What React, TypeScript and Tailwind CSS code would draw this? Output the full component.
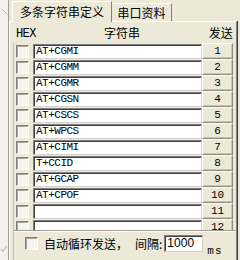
const ROWS = ['AT+CGMI', 'AT+CGMM', 'AT+CGMR', 'AT+CGSN', 'AT+CSCS', 'AT+WPCS', 'AT+CIMI', 'T+CCID', 'AT+GCAP', 'AT+CPOF', '', ''];

const cjk = "font-['Noto_Sans_CJK_SC',sans-serif]";
const mono = "font-['Liberation_Mono',monospace]";

function Check({ className = '' }: { className?: string }) {
  return (
    <span
      className={`block w-[13px] h-[13px] shrink-0 bg-[#F4F4F0] border border-t-[#808080] border-l-[#808080] border-b-white border-r-white shadow-[inset_1px_1px_0_#A7A69E] ${className}`}
    />
  );
}

export default function App() {
  return (
    <div className={`w-[240px] h-[260px] overflow-hidden flex bg-[#ECE9D8] text-black ${cjk}`}>
      {/* clipped neighbour panel */}
      <div className="w-[9px] shrink-0 bg-[#F3F2EC] border-r border-[#9C9B94] relative">
        <svg className="absolute left-[2px] top-[9px]" width="6" height="6" viewBox="0 0 6 6">
          <path d="M0 0 L6 6" stroke="#C8C6BC" strokeWidth="1" />
        </svg>
        <svg className="absolute left-0 top-[245px]" width="8" height="7" viewBox="0 0 8 7">
          <path d="M1 4 L3 6 L7 1" stroke="#C8C6BC" strokeWidth="1.5" fill="none" />
        </svg>
      </div>

      <div className="w-[228px] shrink-0 flex flex-col">
        {/* tabs */}
        <div className="flex items-end h-[21px] pl-[3px]">
          <div className="relative z-10 -mb-px h-[21px] w-[100px] bg-[#ECE9D8] border-l border-t border-r border-l-white border-t-white border-r-[#808080] flex items-center justify-center text-[12px] leading-none">
            多条字符串定义
          </div>
          <div className="h-[18px] w-[60px] border-t border-r border-t-white border-r-[#808080] flex items-center justify-center text-[12px] leading-none pt-[1px]">
            串口资料
          </div>
        </div>

        {/* tab body */}
        <div className="flex-1 flex flex-col border-l border-t border-r border-l-white border-t-white border-r-[#808080] shadow-[1px_0_0_#404040]">
          {/* header */}
          <div className="h-[21px] flex items-end pb-[3px] pl-[6px]">
            <span className={`${mono} text-[12px] tracking-[-0.6px] leading-none w-[23px]`}>HEX</span>
            <span className="w-[169px] text-center text-[12px] leading-none mb-[1px]">字符串</span>
            <span className="w-[31px] text-center text-[12px] leading-none mb-[1px]">发送</span>
          </div>

          <div className="flex-1 flex flex-col ml-[3px] border-l border-[#C4C2B8]">
            {/* list */}
            <div className="h-[187px] overflow-hidden flex flex-col">
              {ROWS.map((r, i) => (
                <div key={i} className="h-[16px] shrink-0 flex items-center pl-[2px]">
                  <Check className="mr-[4px]" />
                  <div
                    className={`w-[169px] h-[15px] bg-white border border-t-[#7F7F7F] border-l-[#7F7F7F] border-b-[#D4D0C8] border-r-[#D4D0C8] shadow-[inset_1px_1px_0_#404040] pl-[2px] ${mono} text-[11px] tracking-[-0.5px] leading-[13px]`}
                  >
                    {r}
                  </div>
                  <div
                    className={`w-[31px] h-[16px] bg-[#ECE9D8] border border-t-white border-l-white border-b-[#8E8B80] border-r-[#8E8B80] shadow-[inset_-1px_-1px_0_#CBC7B8] flex items-start justify-center pt-[1px] ${mono} text-[11px] leading-[12px]`}
                  >
                    {i + 1}
                  </div>
                </div>
              ))}
            </div>

            {/* bottom bar */}
            <div className="flex-1 border-t border-[#A09E95] shadow-[inset_0_1px_0_white] flex items-start pt-[4px] pl-[11px]">
              <Check className="mt-[2px] mr-[6px]" />
              <span className="text-[12px] leading-[17px] mr-[7px]">自动循环发送，</span>
              <span className="text-[12px] leading-[17px] mr-[2px]">间隔:</span>
              <div className="w-[39px] h-[17px] bg-white border border-t-[#7F7F7F] border-l-[#7F7F7F] border-b-[#D4D0C8] border-r-[#D4D0C8] shadow-[inset_1px_1px_0_#404040] pl-[2px] font-['Liberation_Sans',sans-serif] text-[12px] leading-[15px]">
                1000
              </div>
              <span className={`${mono} text-[11px] leading-none ml-[4px] mt-[11px] tracking-[1px]`}>ms</span>
            </div>
          </div>
        </div>
      </div>
    </div>
  );
}
